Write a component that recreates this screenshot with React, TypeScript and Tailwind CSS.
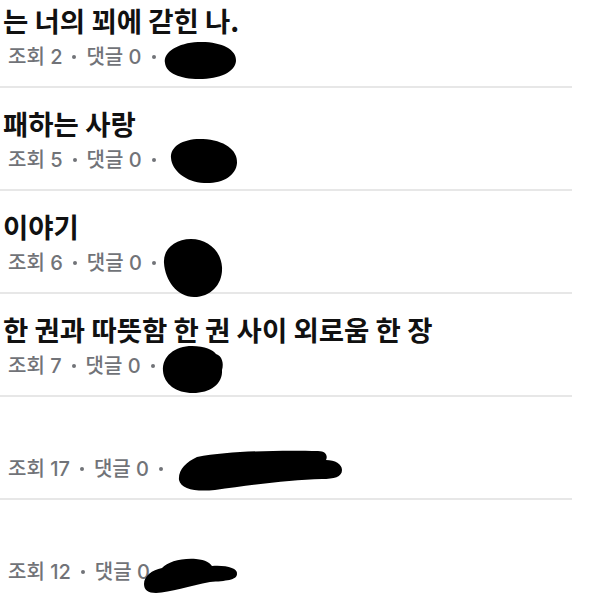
const posts = [
  { title: "는 너의 꾀에 갇힌 나.", views: 2 },
  { title: "패하는 사랑", views: 5 },
  { title: "이야기", views: 6 },
  { title: "한 권과 따뜻함 한 권 사이 외로움 한 장", views: 7 },
  { title: "", views: 17 },
  { title: "", views: 12 },
];

// marker scribbles that hide the author names
const scribbles = [
  "M165 63 C163 52 178 43 198 42 C220 41 237 49 236 61 C235 72 220 79 199 79 C180 79 166 73 165 63 Z",
  "M171 158 C170 146 184 138 203 139 C224 140 238 150 237 163 C236 176 222 184 204 183 C186 182 172 171 171 158 Z",
  "M164 263 C163 249 175 239 191 239 C208 239 221 251 222 267 C223 284 211 297 194 297 C177 297 165 280 164 263 Z",
  "M163 371 C162 356 175 346 192 346 C205 346 213 350 216 354 C222 356 224 363 222 370 C223 384 210 393 193 393 C176 393 164 384 163 371 Z",
  "M179 480 C178 470 186 462 197 457 C230 451 280 450 318 451 C326 451 328 456 326 460 C335 460 342 464 342 470 C342 477 334 479 322 479 C290 480 250 485 215 490 C195 492 181 489 179 480 Z",
  "M144 584 C144 576 152 570 162 568 C168 562 180 558 196 559 C206 560 210 563 212 566 C226 565 238 568 237 574 C237 580 226 581 210 582 C190 586 170 592 156 593 C148 593 144 590 144 584 Z",
];

function PostRow({ title, views }: { title: string; views: number }) {
  return (
    <div className="flex flex-col">
      <div className="h-[101px] flex flex-col">
        <div className="pt-[18px] pl-[3px] h-[54px] text-[27.5px] leading-[34px] font-semibold text-[#111111] whitespace-nowrap">
          {title}
        </div>
        <div
          className="pt-[5px] pl-[8px] flex items-center gap-[10px] text-[20px] leading-[26px] font-medium text-[#717378]"
          style={{ fontFamily: 'Inter, "Noto Sans CJK KR", sans-serif' }}
        >
          <span>조회 {views}</span>
          <span className="w-[4px] h-[4px] rounded-full bg-[#717378]" />
          <span>댓글 0</span>
          <span className="w-[4px] h-[4px] rounded-full bg-[#717378]" />
        </div>
      </div>
      <div className="h-[2px] w-[572px] bg-[#e7e7e7]" />
    </div>
  );
}

export default function App() {
  return (
    <div
      className="relative w-[600px] h-[600px] overflow-hidden bg-white"
      style={{ fontFamily: '"Noto Sans CJK KR", "Noto Sans", sans-serif' }}
    >
      <div className="-mt-[15px] flex flex-col">
        {posts.map((p, i) => (
          <PostRow key={i} title={p.title} views={p.views} />
        ))}
      </div>
      <svg className="absolute inset-0 pointer-events-none" width="600" height="600" viewBox="0 0 600 600">
        {scribbles.map((d, i) => (
          <path key={i} d={d} fill="#000" />
        ))}
      </svg>
    </div>
  );
}
